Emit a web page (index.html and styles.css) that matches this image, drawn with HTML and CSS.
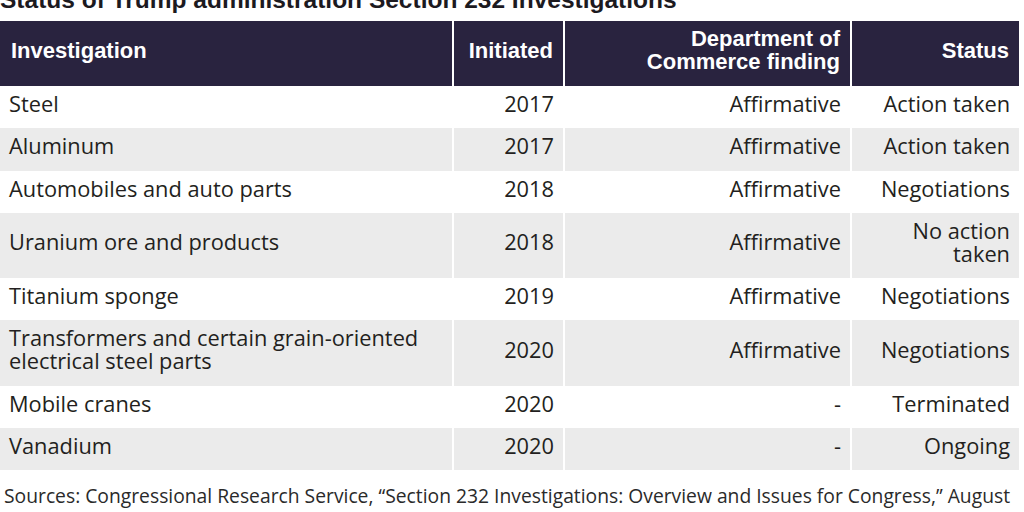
FILE: index.html
```html
<!DOCTYPE html>
<html lang="en">
<head>
<meta charset="utf-8">
<title>Section 232 Investigations</title>
<link rel="stylesheet" href="styles.css">
</head>
<body>
<div class="page">
  <h1 class="title">Status of Trump administration Section 232 Investigations</h1>
  <div class="table">
    <div class="row head">
      <div class="cell">Investigation</div>
      <div class="cell num">Initiated</div>
      <div class="cell num">Department of<br>Commerce finding</div>
      <div class="cell num">Status</div>
    </div>
    <div class="row">
      <div class="cell">Steel</div>
      <div class="cell num">2017</div>
      <div class="cell num">Affirmative</div>
      <div class="cell num">Action taken</div>
    </div>
    <div class="row alt">
      <div class="cell">Aluminum</div>
      <div class="cell num">2017</div>
      <div class="cell num">Affirmative</div>
      <div class="cell num">Action taken</div>
    </div>
    <div class="row">
      <div class="cell">Automobiles and auto parts</div>
      <div class="cell num">2018</div>
      <div class="cell num">Affirmative</div>
      <div class="cell num">Negotiations</div>
    </div>
    <div class="row alt">
      <div class="cell">Uranium ore and products</div>
      <div class="cell num">2018</div>
      <div class="cell num">Affirmative</div>
      <div class="cell num">No action<br>taken</div>
    </div>
    <div class="row">
      <div class="cell">Titanium sponge</div>
      <div class="cell num">2019</div>
      <div class="cell num">Affirmative</div>
      <div class="cell num">Negotiations</div>
    </div>
    <div class="row alt">
      <div class="cell">Transformers and certain grain-oriented<br>electrical steel parts</div>
      <div class="cell num">2020</div>
      <div class="cell num">Affirmative</div>
      <div class="cell num">Negotiations</div>
    </div>
    <div class="row">
      <div class="cell">Mobile cranes</div>
      <div class="cell num">2020</div>
      <div class="cell num">-</div>
      <div class="cell num">Terminated</div>
    </div>
    <div class="row alt">
      <div class="cell">Vanadium</div>
      <div class="cell num">2020</div>
      <div class="cell num">-</div>
      <div class="cell num">Ongoing</div>
    </div>
  </div>
  <p class="source">Sources: Congressional Research Service, “Section 232 Investigations: Overview and Issues for Congress,” August 2020.</p>
</div>
</body>
</html>
```

FILE: styles.css
```css
html, body {
  margin: 0;
  padding: 0;
  background: #ffffff;
}

body {
  font-family: "Open Sans", "Liberation Sans", Arial, sans-serif;
  color: #231f20;
  overflow: hidden;
}

.page {
  width: 1019px;
}

.title {
  font-family: "Liberation Sans", Arial, sans-serif;
  margin: -12px 0 0 0;
  font-size: 24.5px;
  line-height: 23px;
  height: 23px;
  padding-bottom: 10px;
  font-weight: bold;
  color: #1c1a1f;
  white-space: nowrap;
}

.table {
  display: flex;
  flex-direction: column;
}

.row {
  display: grid;
  grid-template-columns: 452px 109px 285px 167px;
  column-gap: 2px;
  background: #ffffff;
}

.cell {
  font-size: 21.8px;
  line-height: 23px;
  padding: 6px 9px 13.25px 9px;
  display: flex;
  flex-direction: column;
  justify-content: center;
}

.num {
  text-align: right;
  align-items: flex-end;
}

.row.alt .cell {
  background: #ebebeb;
}

.row.head .cell {
  background: #29233f;
  color: #ffffff;
  font-family: "Liberation Sans", Arial, sans-serif;
  font-size: 22px;
  font-weight: bold;
  padding: 6px 10px 13px 11px;
}

.source {
  margin: 12px 0 0 4px;
  font-size: 19.3px;
  line-height: 28px;
  color: #2a2a2a;
}
```
